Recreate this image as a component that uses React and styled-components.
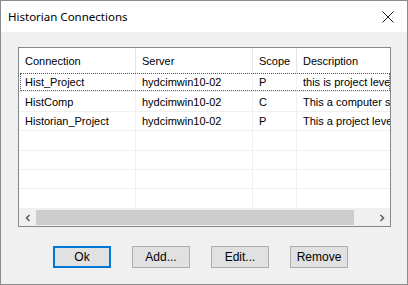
import React from 'react'
import styled, { createGlobalStyle } from 'styled-components'

const GlobalStyle = createGlobalStyle`
    html, body {
        margin: 0;
        padding: 0;
        background: #f0f0f0;
    }
`

const columns = [
    { key: 'connection', title: 'Connection', width: 117 },
    { key: 'server', title: 'Server', width: 117 },
    { key: 'scope', title: 'Scope', width: 44 },
    { key: 'description', title: 'Description', width: 93 },
]

const rows = [
    { connection: 'Hist_Project', server: 'hydcimwin10-02', scope: 'P', description: 'this is project level' },
    { connection: 'HistComp', server: 'hydcimwin10-02', scope: 'C', description: 'This a computer sp' },
    { connection: 'Historian_Project', server: 'hydcimwin10-02', scope: 'P', description: 'This a project level' },
]

const EMPTY_ROWS = 4

const Window = styled.div`
    width: 408px;
    height: 285px;
    box-sizing: border-box;
    border: 1px solid #8c8c8c;
    background: #f0f0f0;
    display: flex;
    flex-direction: column;
    overflow: hidden;
`

const TitleBar = styled.div`
    height: 31px;
    background: #ffffff;
    display: flex;
    align-items: center;
    justify-content: space-between;
    padding: 0 13px 0 7px;
    font-family: "Noto Sans", "Open Sans", sans-serif;
    font-size: 11.5px;
    color: #000;
`

const CloseButton = styled.div`
    width: 12px;
    height: 12px;
    display: flex;
    margin-top: 1px;
`

const Body = styled.div`
    flex: 1;
    display: flex;
    flex-direction: column;
    padding: 15px 16px 0 17px;
`

const ListBox = styled.div`
    height: 180px;
    box-sizing: border-box;
    border: 1px solid #828790;
    background: #ffffff;
    display: flex;
    flex-direction: column;
    overflow: hidden;
`

const Grid = styled.div`
    flex: 1;
    overflow: hidden;
    font-family: "Liberation Sans", Arial, sans-serif;
    font-size: 11px;
    color: #000;
`

const Row = styled.div`
    display: flex;
    height: ${p => p.$header ? '25px' : '19.4px'};
    box-sizing: border-box;
    position: relative;
    border-bottom: ${p => p.$header ? 'none' : '1px solid #f0f0f0'};
`

const Cell = styled.div`
    flex: 0 0 ${p => p.$width}px;
    box-sizing: border-box;
    padding-left: 6px;
    display: flex;
    align-items: center;
    white-space: nowrap;
    overflow: hidden;
    border-right: 1px solid ${p => p.$header ? '#e5e5e5' : '#f0f0f0'};
    &:last-child {
        border-right: none;
    }
`

const FocusRect = styled.div`
    position: absolute;
    inset: 0 0 0 1px;
    border: 1px dotted #555;
    pointer-events: none;
`

const ScrollBar = styled.div`
    height: 17px;
    display: flex;
    align-items: center;
    background: #f0f0f0;
`

const ScrollArrow = styled.div`
    width: 17px;
    height: 17px;
    display: flex;
    align-items: center;
    justify-content: center;
`

const Track = styled.div`
    flex: 1;
    height: 17px;
    display: flex;
    align-items: center;
    padding-right: 19px;
`

const Thumb = styled.div`
    flex: 1;
    height: 15px;
    background: #cdcdcd;
`

const ButtonRow = styled.div`
    display: flex;
    gap: 21px;
    padding: 19px 0 0 35px;
`

const Button = styled.button`
    width: 58px;
    height: 22px;
    box-sizing: border-box;
    padding: 0;
    margin: 0;
    background: #e1e1e1;
    border: ${p => p.$default ? '2px solid #0078d7' : '1px solid #adadad'};
    font-family: "Liberation Sans", Arial, sans-serif;
    font-size: 12px;
    color: #000;
    cursor: pointer;
`

const Chevron = ({ dir }) => (
    <svg width="8" height="8" viewBox="0 0 8 8">
        <path
            d={dir === 'left' ? 'M5.5 1 L2.5 4 L5.5 7' : 'M2.5 1 L5.5 4 L2.5 7'}
            fill="none"
            stroke="#606060"
            strokeWidth="1.6"
        />
    </svg>
)

const App = () => {
    return (
        <>
            <GlobalStyle />
            <Window>
                <TitleBar>
                    <span>Historian Connections</span>
                    <CloseButton>
                        <svg width="12" height="12" viewBox="0 0 12 12">
                            <path d="M0.5 0.5 L11.5 11.5 M11.5 0.5 L0.5 11.5" stroke="#222" strokeWidth="1" />
                        </svg>
                    </CloseButton>
                </TitleBar>
                <Body>
                    <ListBox>
                        <Grid>
                            <Row $header>
                                {columns.map(col => (
                                    <Cell key={col.key} $header $width={col.width}>
                                        {col.title}
                                    </Cell>
                                ))}
                            </Row>
                            {rows.map((row, i) => (
                                <Row key={i}>
                                    {columns.map(col => (
                                        <Cell key={col.key} $width={col.width}>
                                            {row[col.key]}
                                        </Cell>
                                    ))}
                                    {i === 0 && <FocusRect />}
                                </Row>
                            ))}
                            {Array.from({ length: EMPTY_ROWS }).map((_, i) => (
                                <Row key={'empty' + i}>
                                    {columns.map(col => (
                                        <Cell key={col.key} $width={col.width} />
                                    ))}
                                </Row>
                            ))}
                        </Grid>
                        <ScrollBar>
                            <ScrollArrow><Chevron dir="left" /></ScrollArrow>
                            <Track><Thumb /></Track>
                            <ScrollArrow><Chevron dir="right" /></ScrollArrow>
                        </ScrollBar>
                    </ListBox>
                    <ButtonRow>
                        <Button $default>Ok</Button>
                        <Button>Add...</Button>
                        <Button>Edit...</Button>
                        <Button>Remove</Button>
                    </ButtonRow>
                </Body>
            </Window>
        </>
    )
}

export default App
